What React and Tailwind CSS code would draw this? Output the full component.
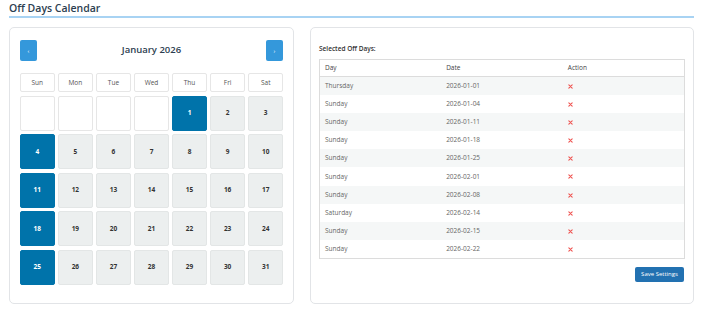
import React from 'react';

const weekdays = ['Sun', 'Mon', 'Tue', 'Wed', 'Thu', 'Fri', 'Sat'];
const selected = [1, 4, 11, 18, 25];

const offDays = [
  ['Thursday', '2026-01-01'],
  ['Sunday', '2026-01-04'],
  ['Sunday', '2026-01-11'],
  ['Sunday', '2026-01-18'],
  ['Sunday', '2026-01-25'],
  ['Sunday', '2026-02-01'],
  ['Sunday', '2026-02-08'],
  ['Saturday', '2026-02-14'],
  ['Sunday', '2026-02-15'],
  ['Sunday', '2026-02-22'],
];

const RemoveIcon = () => (
  <svg width="5" height="5" viewBox="0 0 6 6" className="inline-block">
    <path d="M1 1 L5 5 M5 1 L1 5" stroke="#ef5350" strokeWidth="1.3" strokeLinecap="round" />
  </svg>
);

export default function App() {
  // janeiro 2026 começa numa quinta
  const cells = [];
  for (let i = 0; i < 4; i++) cells.push(null);
  for (let d = 1; d <= 31; d++) cells.push(d);

  return (
    <div className="w-[704px] h-[310px] bg-white font-['Open_Sans',sans-serif] overflow-hidden">
      <div className="px-[9px] pt-[1px]">
        <h1 className="w-[685px] text-[10.5px] leading-[14px] font-semibold text-[#2c3e50] pb-[1px] border-b-2 border-[#a8d3f3]">
          Off Days Calendar
        </h1>

        <div className="flex gap-[16px] mt-[9px]">
          {/* Calendário */}
          <div className="w-[285px] h-[277px] border border-[#e2e4e7] rounded-[5px] px-[10px] pt-[12px]">
            <div className="flex items-center justify-between h-[21px]">
              <button className="w-[17px] h-[21px] rounded-[2px] bg-[#3498db] text-white text-[6px] leading-none flex items-center justify-center">
                ‹
              </button>
              <div className="text-[9.5px] font-semibold text-[#2c3e50]">January 2026</div>
              <button className="w-[17px] h-[21px] rounded-[2px] bg-[#3498db] text-white text-[6px] leading-none flex items-center justify-center">
                ›
              </button>
            </div>

            <div className="grid grid-cols-7 gap-[3.5px] mt-[12px]">
              {weekdays.map(w => (
                <div
                  key={w}
                  className="h-[19px] border border-[#e6e6e6] rounded-[2px] bg-white flex items-center justify-center text-[6.5px] text-[#555]"
                >
                  {w}
                </div>
              ))}
              {cells.map((d, i) => {
                if (d === null) {
                  return <div key={i} className="h-[35px] border border-[#e6e6e6] rounded-[2px] bg-white" />;
                }
                const isSel = selected.includes(d);
                return (
                  <div
                    key={i}
                    className={`h-[35px] rounded-[2px] flex items-center justify-center text-[6.5px] font-bold ${
                      isSel ? 'bg-[#0073aa] text-white border border-[#0073aa]' : 'bg-[#ecefef] text-[#333] border border-[#e3e6e6]'
                    }`}
                  >
                    {d}
                  </div>
                );
              })}
            </div>
          </div>

          {/* Lista */}
          <div className="w-[384px] h-[277px] border border-[#e2e4e7] rounded-[5px] px-[8px] pt-[16px]">
            <div className="text-[6.5px] leading-[10px] font-semibold text-[#333]">Selected Off Days:</div>
            <table className="w-[366px] mt-[5px] table-fixed border border-[#dcdcdc] border-collapse text-[6.5px] text-[#666]">
              <thead>
                <tr className="h-[17px] border-b border-[#dcdcdc]">
                  <th className="text-left font-normal text-[#444] pl-[5px]">Day</th>
                  <th className="text-left font-normal text-[#444] pl-[5px]">Date</th>
                  <th className="text-left font-normal text-[#444] pl-[5px]">Action</th>
                </tr>
              </thead>
              <tbody>
                {offDays.map(([day, date], i) => (
                  <tr key={date} className={`h-[18.2px] ${i % 2 === 0 ? 'bg-[#f5f7f7]' : 'bg-white'}`}>
                    <td className="pl-[5px]">{day}</td>
                    <td className="pl-[5px]">{date}</td>
                    <td className="pl-[5px]">
                      <RemoveIcon />
                    </td>
                  </tr>
                ))}
              </tbody>
            </table>
            <div className="flex justify-end mt-[8px] pr-[1px]">
              <button className="w-[49px] h-[15px] rounded-[2px] bg-[#2271b1] text-white text-[6px] leading-none">
                Save Settings
              </button>
            </div>
          </div>
        </div>
      </div>
    </div>
  );
}
